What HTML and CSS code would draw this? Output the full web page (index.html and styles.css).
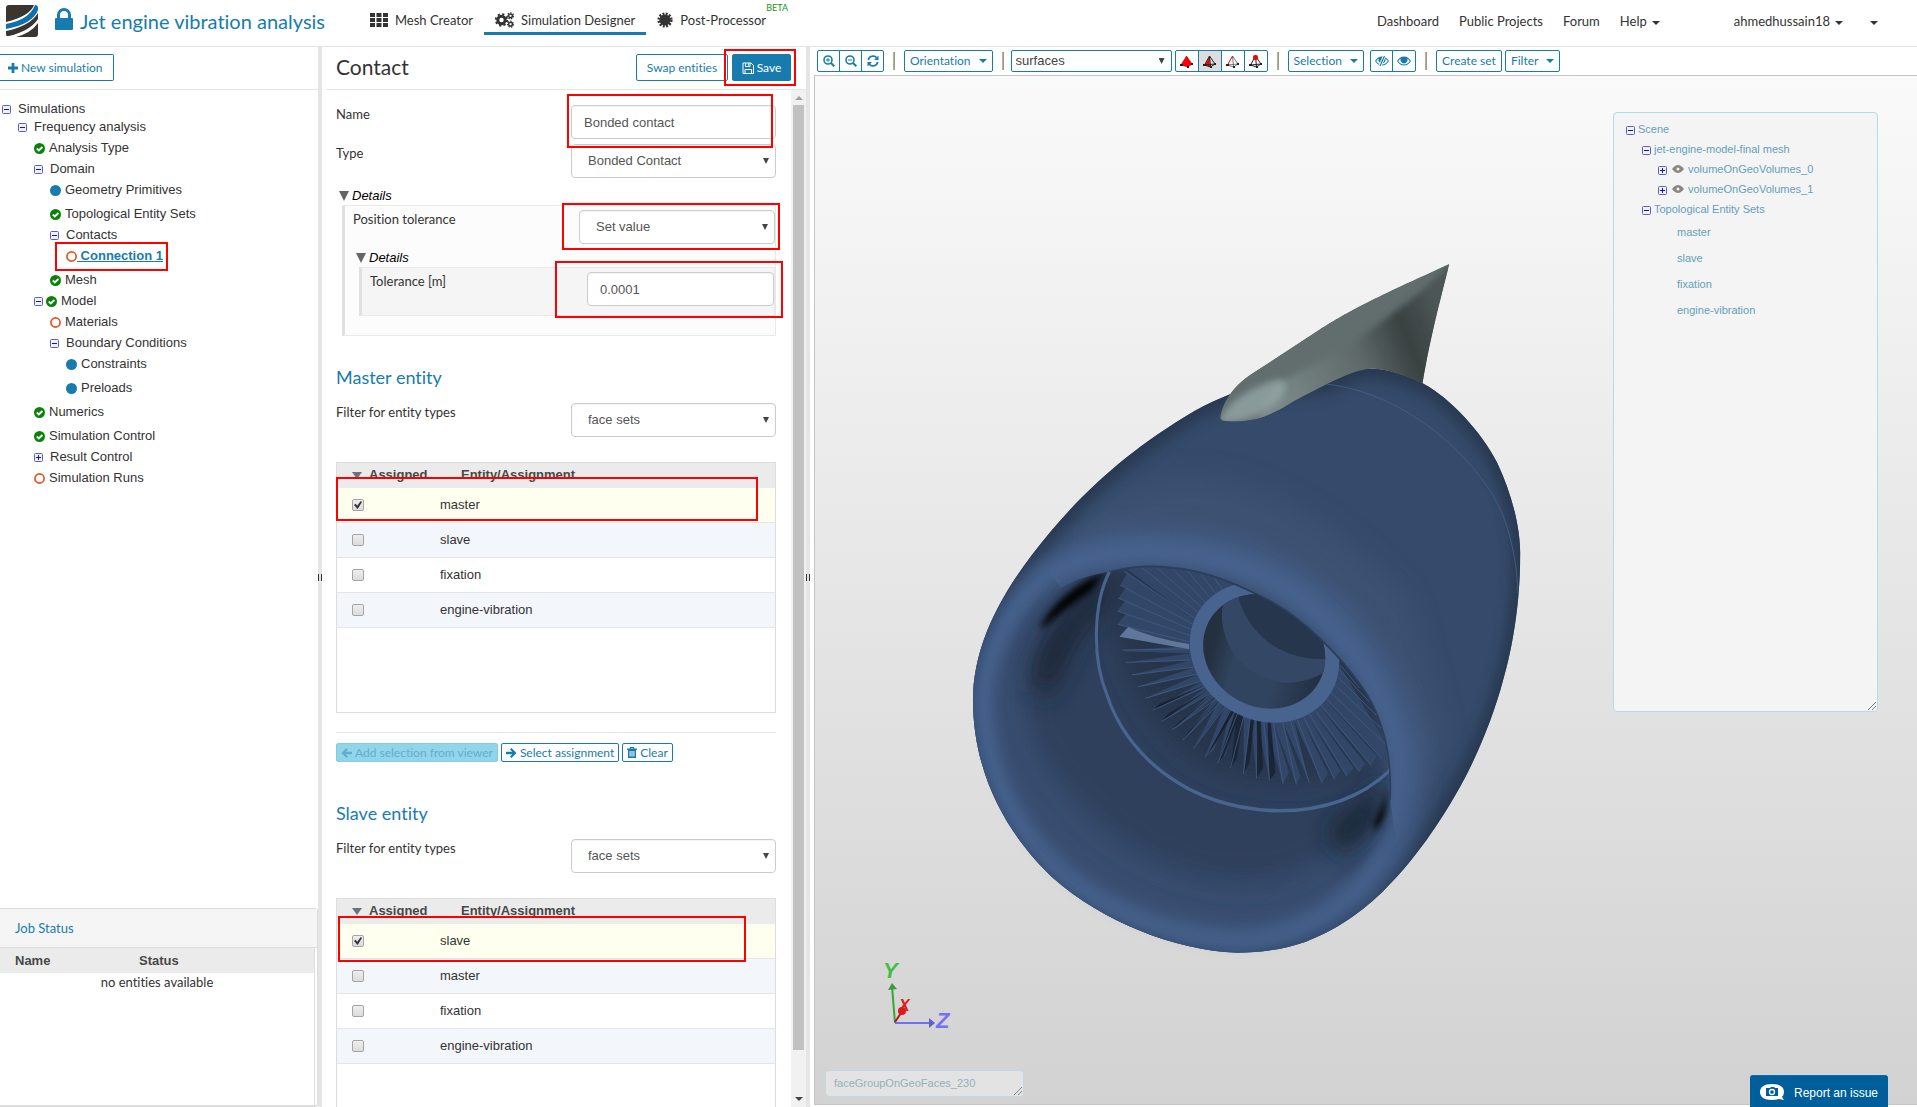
FILE: index.html
```html
<!DOCTYPE html>
<html lang="en">
<head>
<meta charset="utf-8">
<title>Jet engine vibration analysis</title>
<link rel="stylesheet" href="styles.css">
</head>
<body>
<svg class="defs" aria-hidden="true">
  <symbol id="i-lock" viewBox="0 0 18 22"><path d="M2 10V7a7 7 0 0 1 14 0v3h1q1 0 1 1v10q0 1-1 1H1q-1 0-1-1V11q0-1 1-1zM5 10h8V7a4 4 0 0 0-8 0z"/></symbol>
  <symbol id="i-grid" viewBox="0 0 18 14"><path d="M0 0h5v4H0zM6.500 0h5v4h-5zM13 0h5v4h-5zM0 5h5v4H0zM6.500 5h5v4h-5zM13 5h5v4h-5zM0 10h5v4H0zM6.500 10h5v4h-5zM13 10h5v4h-5z"/></symbol>
  <symbol id="i-gears" viewBox="0 0 19 16"><g fill="none" stroke="currentColor"><circle cx="6.500" cy="8" r="3.700" stroke-width="3"/><circle cx="6.500" cy="8" r="5.700" stroke-width="2" stroke-dasharray="2.200 2.270"/><circle cx="15.500" cy="3.800" r="1.900" stroke-width="1.500"/><circle cx="15.500" cy="3.800" r="3" stroke-width="1.200" stroke-dasharray="1.400 1.290"/><circle cx="15.500" cy="12.200" r="1.900" stroke-width="1.500"/><circle cx="15.500" cy="12.200" r="3" stroke-width="1.200" stroke-dasharray="1.400 1.290"/></g></symbol>
  <symbol id="i-burst" viewBox="0 0 16 16"><circle cx="8" cy="8" r="5.600"/><circle cx="8" cy="8" r="6.300" fill="none" stroke="currentColor" stroke-width="2.600" stroke-dasharray="1.900 1.400"/></symbol>
  <symbol id="i-plus" viewBox="0 0 10 10"><path d="M3.600 0h2.800v3.600H10v2.800H6.400V10H3.600V6.400H0V3.600h3.600z"/></symbol>
  <symbol id="i-save" viewBox="0 0 12 12"><path fill="none" stroke="currentColor" d="M1 1h8l2.500 2.500v8H1zM3.500 1v3.500h4.500V1M3 11V7.500h6.500V11M6.500 1.500v2"/></symbol>
  <symbol id="i-left" viewBox="0 0 11 10"><path d="M5.500 0 7 1.500 4.800 3.800H11v2.400H4.800L7 8.500 5.500 10 .5 5z"/></symbol>
  <symbol id="i-right" viewBox="0 0 11 10"><path d="M5.500 0 4 1.500l2.200 2.300H0v2.400h6.200L4 8.500 5.500 10l5-5z"/></symbol>
  <symbol id="i-trash" viewBox="0 0 10 11"><path fill-rule="evenodd" d="M3 1.500V0h4v1.500h3v1.300H9V11H1V2.800H0V1.500zM4 1v.5h2V1zM2.600 4v5.500h1V4zm1.900 0v5.500h1V4zm1.900 0v5.500h1V4z"/></symbol>
  <symbol id="i-zin" viewBox="0 0 12 12"><g fill="none" stroke="currentColor"><circle cx="5" cy="5" r="4" stroke-width="1.600"/><path stroke-width="2" d="m8 8 3.300 3.300"/><path d="M3 5h4M5 3v4"/></g></symbol>
  <symbol id="i-zout" viewBox="0 0 12 12"><g fill="none" stroke="currentColor"><circle cx="5" cy="5" r="4" stroke-width="1.600"/><path stroke-width="2" d="m8 8 3.300 3.300"/><path d="M3 5h4"/></g></symbol>
  <symbol id="i-refresh" viewBox="0 0 12 12"><path fill="none" stroke="currentColor" stroke-width="1.700" d="M1.300 5A4.800 4.800 0 0 1 9.700 2.800M10.700 7A4.800 4.800 0 0 1 2.300 9.200"/><path d="M11.500.500V5H7zM.500 11.500V7H5z"/></symbol>
  <symbol id="i-eye" viewBox="0 0 14 10"><path fill-rule="evenodd" d="M7 .5C10 .5 12.500 2.500 14 5c-1.500 2.500-4 4.500-7 4.500S1.500 7.500 0 5C1.500 2.500 4 .5 7 .5zM3.700 2.400C2.600 3.100 1.800 4 1.200 5 2.500 7 4.500 8.500 7 8.500S11.500 7 12.800 5c-.6-1-1.400-1.900-2.500-2.600a3.600 3.600 0 1 1-6.600 0z"/></symbol>
  <symbol id="i-eyeoff" viewBox="0 0 14 10"><path fill-rule="evenodd" d="M7 .5C10 .5 12.500 2.500 14 5c-1.500 2.500-4 4.500-7 4.500S1.500 7.500 0 5C1.500 2.500 4 .5 7 .5zM3.700 2.400C2.600 3.100 1.800 4 1.200 5 2.500 7 4.500 8.500 7 8.500S11.500 7 12.800 5c-.6-1-1.400-1.900-2.500-2.600a3.600 3.600 0 1 1-6.600 0z"/><path stroke="#fff" stroke-width="3" d="M9.500 0 5 10"/><path stroke="currentColor" stroke-width="1.200" d="M9.500 0 5 10"/></symbol>
  <symbol id="i-eyegray" viewBox="0 0 12 8"><path fill="#8a8880" fill-rule="evenodd" d="M0 4Q3 0 6 0t6 4Q9 8 6 8T0 4zm4.500 0a1.500 1.500 0 1 0 3 0 1.500 1.500 0 1 0-3 0z"/></symbol>
  <symbol id="i-ok" viewBox="0 0 11 11"><circle cx="5.500" cy="5.500" r="5.500" fill="#0a820a"/><path fill="none" stroke="#fff" stroke-width="1.800" d="m2.800 5.500 2 2L8.400 4"/></symbol>
  <symbol id="i-dot" viewBox="0 0 11 11"><circle cx="5.500" cy="5.500" r="5.500" fill="#177cad"/></symbol>
  <symbol id="i-ring" viewBox="0 0 11 11"><circle cx="5.500" cy="5.500" r="4.600" fill="none" stroke="#e0572a" stroke-width="1.700"/></symbol>
  <symbol id="i-minus" viewBox="0 0 9 9"><rect x=".5" y=".5" width="8" height="8" rx="1" fill="#f0f0fc" stroke="#5b63ad"/><path stroke="#1414b0" d="M2 4.500h5"/></symbol>
  <symbol id="i-expand" viewBox="0 0 9 9"><rect x=".5" y=".5" width="8" height="8" rx="1" fill="#f0f0fc" stroke="#5b63ad"/><path stroke="#1414b0" d="M2 4.500h5M4.500 2v5"/></symbol>
  <symbol id="i-tet1" viewBox="0 0 13 13"><path fill="#f00" stroke="#900" stroke-width=".6" d="M6.500 1 1 10l7 2 4-3z"/><path fill="#222" d="M0 9h3v2H0zM7 11h2v2H7zM11 8h2v2h-2z"/></symbol>
  <symbol id="i-tet2" viewBox="0 0 13 13"><path fill="#f00" d="M6.500 1 2 10l5 2z"/><path fill="none" stroke="#222" d="M6.500 1 1.500 10l6 2zm0 0L12 9l-4.500 3M1.500 10 12 9"/><path fill="#222" d="M0 9h3v2H0zM7 11h2v2H7zM11 8h2v2h-2z"/></symbol>
  <symbol id="i-tet3" viewBox="0 0 13 13"><path fill="none" stroke="#555" stroke-width=".8" d="M6.500 1 12 9l-4.500 3zM7.500 12 1.500 10 12 9"/><path stroke="#e00" d="m6.500 1-5 9"/><path fill="#222" d="M0 9h3v2H0zM7 11h2v2H7zM11 8h2v2h-2z"/></symbol>
  <symbol id="i-tet4" viewBox="0 0 13 13"><path fill="none" stroke="#222" d="M6.500 1 1.500 10l6 2zm0 0L12 9l-4.500 3M1.500 10 12 9"/><path fill="#222" d="M0 9h3v2H0zM7 11h2v2H7zM11 8h2v2h-2z"/><rect x="4" width="5" height="5" rx="2" fill="#f00"/></symbol>
</svg>

<header class="top">
  <a class="logo" href="#" aria-label="Home">
    <svg width="32" height="32" viewBox="0 0 32 32"><defs><clipPath id="lc"><rect width="32" height="32" rx="3"/></clipPath></defs><g clip-path="url(#lc)"><path fill="#fff" d="M0 0h32v32H0z"/><path fill="#3a3531" d="M0 0h28Q24 11 0 17z"/><path fill="#0f70ae" d="M0 19Q23 15 29 0h3v5Q27 19 0 24z"/><path fill="#3a3531" d="M0 26Q24 21 32 8v6Q24 26 3 31L0 31zM10 32q15-4 22-14v14z"/></g></svg>
  </a>
  <svg class="lock" width="18" height="22"><use href="#i-lock"/></svg>
  <h1 class="title">Jet engine vibration analysis</h1>
  <nav class="modes">
    <a href="#"><svg width="18" height="14"><use href="#i-grid"/></svg>Mesh Creator</a>
    <a href="#" class="on"><svg width="19" height="16"><use href="#i-gears"/></svg>Simulation Designer</a>
    <a href="#"><svg width="16" height="16"><use href="#i-burst"/></svg>Post-Processor<sup class="beta">BETA</sup></a>
  </nav>
  <nav class="links">
    <a href="#">Dashboard</a><a href="#">Public Projects</a><a href="#">Forum</a><a href="#">Help<i class="caret"></i></a>
    <a href="#" class="user">ahmedhussain18<i class="caret"></i></a><a href="#" class="more" aria-label="More"><i class="caret"></i></a>
  </nav>
</header>

<main class="work">
  <section class="side">
    <div class="side-bar"><button class="btn new"><svg width="10" height="10"><use href="#i-plus"/></svg>New simulation</button></div>
    <ul class="tree">
      <li class="folder"><svg class="tg"><use href="#i-minus"/></svg>Simulations</li>
      <li class="folder l1"><svg class="tg"><use href="#i-minus"/></svg>Frequency analysis</li>
      <li class="l2"><svg class="st"><use href="#i-ok"/></svg>Analysis Type</li>
      <li class="folder l2"><svg class="tg"><use href="#i-minus"/></svg>Domain</li>
      <li class="l3"><svg class="st"><use href="#i-dot"/></svg>Geometry Primitives</li>
      <li class="l3"><svg class="st"><use href="#i-ok"/></svg>Topological Entity Sets</li>
      <li class="folder l3"><svg class="tg"><use href="#i-minus"/></svg>Contacts</li>
      <li class="l4"><svg class="st flush"><use href="#i-ring"/></svg><a href="#" class="current">&nbsp;Connection 1</a><span class="mark m-conn"></span></li>
      <li class="l3"><svg class="st"><use href="#i-ok"/></svg>Mesh</li>
      <li class="folder l2"><svg class="tg near"><use href="#i-minus"/></svg><svg class="st"><use href="#i-ok"/></svg>Model</li>
      <li class="l3"><svg class="st"><use href="#i-ring"/></svg>Materials</li>
      <li class="folder l3"><svg class="tg"><use href="#i-minus"/></svg>Boundary Conditions</li>
      <li class="l4"><svg class="st"><use href="#i-dot"/></svg>Constraints</li>
      <li class="l4"><svg class="st"><use href="#i-dot"/></svg>Preloads</li>
      <li class="l2"><svg class="st"><use href="#i-ok"/></svg>Numerics</li>
      <li class="l2"><svg class="st"><use href="#i-ok"/></svg>Simulation Control</li>
      <li class="folder l2"><svg class="tg"><use href="#i-expand"/></svg>Result Control</li>
      <li class="l2"><svg class="st"><use href="#i-ring"/></svg>Simulation Runs</li>
    </ul>
    <section class="jobs">
      <h2>Job Status</h2>
      <div class="jobs-body">
        <table><thead><tr><th>Name</th><th>Status</th></tr></thead><tbody><tr><td colspan="2">no entities available</td></tr></tbody></table>
      </div>
    </section>
  </section>
  <div class="split"><i></i></div>

  <section class="panel">
    <div class="panel-head">
      <h2>Contact</h2>
      <button class="btn swap">Swap entities</button>
      <span class="wrap"><button class="btn save"><svg width="12" height="12"><use href="#i-save"/></svg>Save</button><span class="mark m-save"></span></span>
    </div>
    <div class="panel-body">
      <form class="form">
        <div class="row"><label for="nm">Name</label><span class="wrap"><input class="ctl" id="nm" value="Bonded contact"><span class="mark m-name"></span></span></div>
        <div class="row"><label for="tp">Type</label><span class="wrap sel"><select class="ctl" id="tp"><option>Bonded Contact</option></select></span></div>
        <div class="details">Details</div>
        <div class="box">
          <div class="row"><label for="pt">Position tolerance</label><span class="wrap sel"><select class="ctl" id="pt"><option>Set value</option></select><span class="mark m-pos"></span></span></div>
          <div class="details inner">Details</div>
          <div class="box deep">
            <div class="row"><label for="tl">Tolerance [m]</label><span class="wrap"><input class="ctl" id="tl" value="0.0001"><span class="mark m-tol"></span></span></div>
          </div>
        </div>

        <h3>Master entity</h3>
        <div class="row"><label for="f1">Filter for entity types</label><span class="wrap sel"><select class="ctl" id="f1"><option>face sets</option></select></span></div>
        <div class="grid">
          <table>
            <thead><tr><th class="c1">Assigned</th><th>Entity/Assignment</th></tr></thead>
            <tbody>
              <tr class="picked"><td><input type="checkbox" id="a1" checked></td><td><label for="a1">master</label></td></tr>
              <tr><td><input type="checkbox" id="a2"></td><td><label for="a2">slave</label></td></tr>
              <tr><td><input type="checkbox" id="a3"></td><td><label for="a3">fixation</label></td></tr>
              <tr><td><input type="checkbox" id="a4"></td><td><label for="a4">engine-vibration</label></td></tr>
            </tbody>
          </table>
          <span class="mark m-master"></span>
        </div>
        <div class="acts">
          <button type="button" class="btn sm" disabled><svg width="11" height="10"><use href="#i-left"/></svg>Add selection from viewer</button>
          <button type="button" class="btn sm"><svg width="11" height="10"><use href="#i-right"/></svg>Select assignment</button>
          <button type="button" class="btn sm"><svg width="10" height="11"><use href="#i-trash"/></svg>Clear</button>
        </div>

        <h3 class="next">Slave entity</h3>
        <div class="row"><label for="f2">Filter for entity types</label><span class="wrap sel"><select class="ctl" id="f2"><option>face sets</option></select></span></div>
        <div class="grid">
          <table>
            <thead><tr><th class="c1">Assigned</th><th>Entity/Assignment</th></tr></thead>
            <tbody>
              <tr class="picked"><td><input type="checkbox" id="b1" checked></td><td><label for="b1">slave</label></td></tr>
              <tr><td><input type="checkbox" id="b2"></td><td><label for="b2">master</label></td></tr>
              <tr><td><input type="checkbox" id="b3"></td><td><label for="b3">fixation</label></td></tr>
              <tr><td><input type="checkbox" id="b4"></td><td><label for="b4">engine-vibration</label></td></tr>
            </tbody>
          </table>
          <span class="mark m-slave"></span>
        </div>
      </form>
      <div class="scroll"><i class="up"></i><i class="thumb"></i><i class="down"></i></div>
    </div>
  </section>
  <div class="split"><i></i></div>

  <section class="viewer">
    <div class="tools">
      <div class="group zoomers">
        <button aria-label="Zoom in"><svg width="12" height="12"><use href="#i-zin"/></svg></button><button aria-label="Zoom out"><svg width="12" height="12"><use href="#i-zout"/></svg></button><button aria-label="Reset view"><svg width="12" height="12"><use href="#i-refresh"/></svg></button>
      </div>
      <i class="bar"></i>
      <button class="btn tool">Orientation<i class="caret"></i></button>
      <i class="bar"></i>
      <span class="sel surf"><select aria-label="Render mode"><option>surfaces</option></select></span>
      <div class="group tets">
        <button aria-label="Volumes"><svg width="13" height="13"><use href="#i-tet1"/></svg></button><button class="down" aria-label="Faces"><svg width="13" height="13"><use href="#i-tet2"/></svg></button><button aria-label="Edges"><svg width="13" height="13"><use href="#i-tet3"/></svg></button><button aria-label="Nodes"><svg width="13" height="13"><use href="#i-tet4"/></svg></button>
      </div>
      <i class="bar"></i>
      <button class="btn tool">Selection<i class="caret"></i></button>
      <div class="group eyes"><button aria-label="Hide"><svg width="14" height="10"><use href="#i-eyeoff"/></svg></button><button aria-label="Show"><svg width="14" height="10"><use href="#i-eye"/></svg></button></div>
      <i class="bar"></i>
      <button class="btn tool set">Create set</button>
      <button class="btn tool filter">Filter<i class="caret"></i></button>
    </div>

    <div class="canvas">
      <svg class="model" viewBox="0 0 1102 1028" aria-label="Jet engine model">
        <defs>
          <filter id="b8" x="-50%" y="-50%" width="200%" height="200%"><feGaussianBlur stdDeviation="8"/></filter>
          <filter id="b16" x="-50%" y="-50%" width="200%" height="200%"><feGaussianBlur stdDeviation="16"/></filter>
          <filter id="b30" x="-50%" y="-50%" width="200%" height="200%"><feGaussianBlur stdDeviation="30"/></filter>
          <linearGradient id="side" gradientUnits="userSpaceOnUse" x1="880" y1="380" x2="1290" y2="180"><stop offset="0" stop-color="#7a8888"/><stop offset=".5" stop-color="#5e6968"/><stop offset=".78" stop-color="#384140"/><stop offset="1" stop-color="#4c5655"/></linearGradient>
          <linearGradient id="bore" gradientUnits="userSpaceOnUse" x1="680" y1="900" x2="980" y2="1000"><stop offset="0" stop-color="#22303f"/><stop offset=".2" stop-color="#31445f"/><stop offset=".55" stop-color="#31445f"/><stop offset="1" stop-color="#1e2b3e"/></linearGradient>
          <path id="hull" d="M60 1000C62 900 110 800 215 685C320 570 450 465 640 372C670 358 705 345 735 335L985 312C1030 295 1060 280 1100 280C1150 282 1195 295 1235 312C1310 345 1390 420 1430 485C1475 565 1492 640 1490 690C1490 790 1470 890 1445 960C1420 1040 1370 1140 1320 1210C1250 1310 1190 1370 1130 1420C1060 1475 1000 1505 930 1528C870 1545 810 1552 750 1552C590 1548 400 1485 270 1390C180 1320 60 1190 60 1000Z"/>
          <path id="pylon" d="M706 388C712 350 745 312 800 285L965 195C1040 155 1110 125 1305 52C1285 120 1258 200 1235 312Q1150 280 1100 280C1050 282 960 325 900 350Q860 372 820 385C785 396 740 397 712 393Z"/>
          <clipPath id="inPylon"><use href="#pylon"/></clipPath>
          <clipPath id="inHull"><use href="#hull"/></clipPath>
          <clipPath id="mouth"><path d="M0 1568V600H150L290 758C330 738 370 729 420 722C500 705 560 710 620 718C700 730 800 765 880 808C960 855 1040 925 1090 990C1140 1060 1155 1140 1150 1220L1185 1400L1000 1568Z"/></clipPath>
          <clipPath id="hole"><ellipse cx="821" cy="896" rx="161" ry="123" transform="rotate(12 821 896)"/></clipPath>
        </defs>
        <g transform="translate(135 164) scale(.38265 .45918)">
          <use href="#hull" fill="#364b6b"/>
          <g clip-path="url(#inHull)">
            <path fill="#3c5273" filter="url(#b30)" d="M300 620C600 430 900 520 1200 780L1300 1100L1180 1250C1100 900 800 640 300 700Z" opacity=".9"/>
            <use href="#hull" fill="none" stroke="#283850" stroke-width="44" filter="url(#b16)"/>
            <path fill="none" stroke="#45618d" stroke-width="56" filter="url(#b30)" d="M85 1000C90 880 180 745 330 700C520 640 740 670 900 750C1040 820 1150 960 1190 1100C1215 1220 1180 1330 1080 1420C960 1510 850 1530 750 1530C560 1520 400 1465 290 1385C160 1280 85 1160 85 1000Z"/>
            <path fill="none" stroke="#47638f" stroke-width="38" filter="url(#b16)" d="M88 1000C96 880 200 730 350 695C520 660 740 685 890 770C1030 850 1120 960 1165 1100C1180 1220 1150 1320 1060 1410C950 1490 850 1515 750 1520C560 1510 400 1450 290 1370C160 1270 88 1140 88 1000Z"/>
            <path fill="none" stroke="#435f8b" stroke-width="2" d="M985 314C1200 335 1380 480 1440 590C1470 650 1482 710 1484 770"/>
          </g>
          <g clip-path="url(#inPylon)">
            <use href="#pylon" fill="#626e6e"/>
            <path fill="url(#side)" filter="url(#b8)" d="M1305 52C1240 110 1140 175 1000 250C930 285 860 300 830 340L790 420H1300L1330 52Z"/>
            <path fill="#94a5a6" filter="url(#b8)" d="M700 400C725 350 780 325 850 305Q900 300 860 350Q790 400 700 400Z" opacity=".8"/>
          </g>
          <g clip-path="url(#mouth)">
            <path fill="#374d70" filter="url(#b30)" d="M130 1000C130 900 200 810 300 755L420 700L640 680L900 780L1150 1000L1135 1240C1110 1350 980 1470 780 1495C600 1490 410 1430 290 1330C190 1240 130 1120 130 1000Z"/>
            <path fill="#2f415c" filter="url(#b30)" d="M200 1000C200 910 250 820 330 770L420 700L640 680L900 780L1130 1000L1110 1200C1060 1310 950 1390 780 1400C620 1400 470 1340 350 1240C260 1160 200 1090 200 1000Z"/>
            <path fill="#1d2838" filter="url(#b30)" d="M210 980C215 890 270 800 430 715L450 770L350 850L265 990Z"/>
            <path fill="#000" filter="url(#b8)" d="M235 845C260 800 320 750 410 722L372 762L300 805L245 843Z"/>
            <path fill="#26354c" filter="url(#b30)" d="M420 700L1080 800L1130 1120Q900 1230 640 1130Q400 980 420 700Z"/>
            <path fill="#18222f" filter="url(#b30)" d="M1130 1160Q1080 1230 980 1290L1030 1340L1120 1260Z"/>
            <path fill="#000" filter="url(#b8)" d="M1148 1170Q1136 1230 1108 1270L1110 1288L1135 1255Z"/>
            <path fill="#33486a" opacity=".92" d="M660 840L455 718L462 727L445 752L460 757L440 780L458 786L437 808L460 814L438 837L463 843L443 862L625 885L450 893L464 896L630 900L460 920L632 915L475 947L484 948L640 930L490 973L503 973L650 945L510 998L526 996L662 960L530 1024L545 1018L675 970L553 1048L570 1040L690 980L580 1067L600 1058L700 990L608 1089L628 1075L705 1000L636 1108L720 1010L667 1126L690 1110L735 1015L700 1140L720 1122L752 1020L733 1150L750 1130L768 1030L767 1163L782 1140L785 1035L801 1173L818 1150L800 1040L835 1177L850 1155L820 1045L870 1184L886 1160L845 1050L905 1186L916 1168L870 1050L939 1183L900 1048L972 1182L988 1162L920 1044L1005 1175L1020 1155L935 1038L1037 1167L1055 1150L950 1028L1070 1158L1085 1140L965 1015L1100 1144L1115 1124L980 1000L1130 1131L1141 1100L1000 900L740 745L660 710L455 712Z"/>
            <path fill="#141d2b" opacity=".8" d="M752 1020L733 1150L750 1130L768 1030ZM735 1020L667 1126L695 1095L742 1028ZM785 1040L767 1163L782 1140L795 1042ZM800 1042L801 1173L818 1150L812 1044ZM745 1028L700 1140L715 1125L756 1034ZM830 1045L835 1177L850 1160L838 1046ZM700 1000L608 1089L622 1072ZM685 990L580 1067L596 1052ZM664 970L530 1024L548 1010ZM675 980L553 1048L570 1032Z"/>
            <path fill="none" stroke="#425a82" stroke-width="2" d="M455 722L650 830M445 752L642 840M440 780L635 850M437 808L630 862M438 837L625 875M500 712L655 815M540 713L665 805M580 715L675 795M620 720L685 785M655 727L700 775M690 735L715 765M450 893L625 890M460 920L628 915M475 947L640 930M490 973L650 945M510 998L660 960M530 1024L670 972M553 1048L685 985M580 1067L695 1000M608 1089L705 1008M636 1108L720 1015M667 1126L735 1022M700 1140L752 1030M733 1150L768 1036M767 1163L785 1040M801 1173L800 1044M835 1177L820 1048M870 1184L845 1050M905 1186L870 1050M939 1183L890 1048M972 1182L908 1045M1005 1175L925 1040M1037 1167L940 1033M1070 1158L955 1025M1100 1144L970 1013M1130 1131L985 1000M1140 1100L995 985M1135 1070L1005 968M1120 1040L1012 950M1095 1005L1018 937M1070 975L1020 925"/>
            <path fill="#60769a" d="M466 843L443 864L625 891V880Q530 868 466 843Z"/>
            <path fill="none" stroke="#48648f" stroke-width="8" d="M417 722C375 790 370 910 410 990C460 1120 620 1240 860 1243C990 1243 1080 1210 1150 1155"/>
            <ellipse cx="822" cy="898" rx="198" ry="150" transform="rotate(14 822 898)" fill="#48638d"/>
            <g clip-path="url(#hole)"><path fill="url(#bore)" d="M640 740h360v300H640z"/><path fill="#344866" d="M735 765Q700 790 715 850Q745 950 880 965Q950 962 1000 930V740Z"/><path fill="#26364d" d="M750 765Q765 830 830 875Q900 918 1000 912V740Z"/></g>
          </g>
          <path fill="none" stroke="#2b3e5b" stroke-width="4" d="M420 722C500 705 560 710 620 718C700 730 800 765 880 808C960 855 1040 925 1090 990C1140 1060 1155 1140 1150 1220"/>
        </g>
      </svg>

      <svg class="axes" width="80" height="80" viewBox="0 0 80 80" aria-label="Axes">
        <path stroke="#36a83b" stroke-width="2" d="M15 65 12 28"/><path fill="#3a9c3f" d="m8 32 4-7 5 6z"/>
        <path stroke="#6f70f5" stroke-width="2" d="M15 65h36"/><path fill="#6062c8" d="m49 60 6 5-6 5z"/>
        <path stroke="#b41818" stroke-width="2" d="m15 64 8-12"/><circle cx="22" cy="53" r="4" fill="#d81c1c"/>
        <text x="3" y="20" class="ay">Y</text><text x="19" y="53" class="ax">X</text><text x="56" y="70" class="az">Z</text>
      </svg>

      <ul class="scene">
        <li><svg class="tg"><use href="#i-minus"/></svg>Scene</li>
        <li class="l1"><svg class="tg"><use href="#i-minus"/></svg>jet-engine-model-final mesh</li>
        <li class="l2"><svg class="tg"><use href="#i-expand"/></svg><svg class="eye" width="12" height="8"><use href="#i-eyegray"/></svg>volumeOnGeoVolumes_0</li>
        <li class="l2"><svg class="tg"><use href="#i-expand"/></svg><svg class="eye" width="12" height="8"><use href="#i-eyegray"/></svg>volumeOnGeoVolumes_1</li>
        <li class="l1"><svg class="tg"><use href="#i-minus"/></svg>Topological Entity Sets</li>
        <li class="leaf">master</li><li class="leaf">slave</li><li class="leaf">fixation</li><li class="leaf">engine-vibration</li>
        <li class="grip"><svg width="8" height="8" viewBox="0 0 8 8"><path stroke="#777" d="m0 8 8-8M4 8l4-4"/></svg></li>
      </ul>

      <div class="picked-name">faceGroupOnGeoFaces_230<svg width="8" height="8" viewBox="0 0 8 8"><path stroke="#888" d="m0 8 8-8M4 8l4-4"/></svg></div>
    </div>
  </section>
</main>
<button class="report"><svg width="25" height="17" viewBox="0 0 25 17"><path fill="#fff" d="M12 0C20 0 24 3 24 8q0 3-2 5l2 3-5-1q-3 1-7 1C4 16 0 13 0 8S4 0 12 0z"/><path fill="#005f9b" d="M6 4h4l1-1h3l1 1h3v8H6z"/><circle cx="12" cy="8" r="2.500" fill="none" stroke="#fff" stroke-width="1.300"/></svg>Report an issue</button>
</body>
</html>
```
FILE: styles.css
```css
* { box-sizing: border-box; }
html, body { height: 100%; margin: 0; }
body {
  display: flex;
  flex-direction: column;
  overflow: hidden;
  background: #fff;
  color: #333;
  font: 13px/18px Lato, sans-serif;
  font-variant-ligatures: none;
}
h1, h2, h3, ul { margin: 0; padding: 0; font-weight: 400; }
ul { list-style: none; }
a { color: inherit; text-decoration: none; }
button, input, select { font: inherit; margin: 0; }
button { font-variant-ligatures: none; }
svg { fill: currentColor; flex: none; }
.defs { position: absolute; width: 0; height: 0; }
.mark { position: absolute; border: 2px solid #f00; z-index: 2; pointer-events: none; }
.caret {
  display: inline-block;
  border: 4px solid transparent;
  border-top-color: currentColor;
  border-bottom: 0;
  margin-left: 5px;
  vertical-align: 1px;
}

/* top bar */
.top { display: flex; align-items: center; flex: none; height: 47px; padding: 0 39px 5px 6px; border-bottom: 1px solid #e5e5e5; }
.logo { display: flex; }
.lock { margin: 0 7px 4px 17px; color: #177cad; }
.title { font-size: 20px; line-height: 26px; color: #177cad; white-space: nowrap; }
.modes { display: flex; margin-left: 34px; align-self: stretch; }
.modes a { display: flex; align-items: center; gap: 7px; height: 35px; padding: 8px 11px 0; border-bottom: 3px solid transparent; position: relative; white-space: nowrap; }
.modes .on { border-color: #177cad; }
.beta { position: absolute; right: -11px; top: 2px; font-size: 9px; line-height: 11px; color: #149414; }
.links { display: flex; gap: 20px; margin-left: auto; white-space: nowrap; }
.user { margin-left: 54px; }
.more { margin-left: 2px; }

/* columns */
.work { flex: 1; min-height: 0; display: grid; grid-template-columns: 318px 4px 484px 4px minmax(0, 1fr); }
.split { background: #e5e5e5; display: flex; align-items: center; justify-content: center; }
.split i { width: 4px; height: 7px; border: solid #333; border-width: 0 1px; }

.btn {
  display: inline-flex; align-items: center; justify-content: center; gap: 3px;
  padding: 0 10px; height: 27px;
  border: 1px solid #177cad; border-radius: 2px;
  background: #fff; color: #177cad; font-size: 12px; white-space: nowrap;
}
.btn.tool { height: 22px; padding: 0 5px; }

/* left column */
.side { display: flex; flex-direction: column; min-height: 0; }
.side-bar { flex: none; height: 43px; padding-top: 7px; border-bottom: 1px solid #e5e5e5; }
.new { border-left: 0; padding: 0 10px 0 8px; border-radius: 0 2px 2px 0; }
.tree { flex: 1; padding: 10px 0 0 2px; font: 13px/18px "Liberation Sans", sans-serif; }
.tree li { position: relative; display: flex; align-items: center; height: 24px; white-space: nowrap; }
.tree .folder { height: 18px; }
.tree .l1 { padding-left: 16px; }
.tree .l2 { padding-left: 32px; }
.tree .l3 { padding-left: 48px; }
.tree .l4 { padding-left: 64px; }
.tg { width: 9px; height: 9px; margin-right: 7px; }
.tg.near { margin-right: 3px; }
.st { width: 11px; height: 11px; margin-right: 4px; }
.st.flush { margin-right: 0; }
.current { color: #177cad; font-weight: 700; text-decoration: underline; }
.m-conn { left: 53px; top: -2px; width: 113px; height: 29px; }
.jobs { flex: none; height: 199px; border: 1px solid #ddd; border-width: 1px 1px 2px 0; border-radius: 0 3px 3px 0; display: flex; flex-direction: column; }
.jobs h2 { font-size: 13px; line-height: 38px; padding-left: 15px; color: #177cad; background: #f5f5f5; border-bottom: 1px solid #ddd; }
.jobs-body { flex: 1; margin-right: 2px; border-right: 1px solid #ddd; }
.jobs table { width: 100%; border-collapse: collapse; }
.jobs th { width: 124px; height: 25px; padding: 0 0 0 15px; text-align: left; font: 700 13px/18px "Liberation Sans", sans-serif; color: #484848; background: #ebebeb; }
.jobs th + th { width: auto; }
.jobs td { padding: 0; text-align: center; }

/* contact panel */
.panel { display: flex; flex-direction: column; min-height: 0; }
.panel-head { flex: none; display: flex; align-items: flex-start; gap: 4px; height: 43px; margin-left: 4px; padding: 7px 15px 0 10px; border-bottom: 1px solid #e5e5e5; }
.panel-head h2 { flex: 1; font-size: 21px; line-height: 26px; }
.wrap { position: relative; display: block; }
.swap { width: 92px; }
.save { width: 59px; padding: 0; background: #177cad; color: #fff; }
.m-save { inset: -5px -5px -5px -8px; }
.panel-body { flex: 1; min-height: 0; display: flex; }
.form { flex: 1; min-width: 0; overflow: hidden; padding: 15px 15px 0 14px; }
.row { display: grid; grid-template-columns: 1fr 205px; height: 34px; }
.row + .row { margin-top: 5px; }
.ctl {
  display: block; width: 100%; height: 34px; padding: 0 12px;
  border: 1px solid #ccc; border-radius: 4px; background: #fff; color: #555;
  font: 13px/18px "Liberation Sans", sans-serif;
  box-shadow: inset 0 1px 1px #0000000d;
}
select { appearance: none; }
select.ctl { padding: 0 16px; }
.sel { position: relative; }
.sel::after { content: ""; position: absolute; right: 7px; top: 14px; width: 6px; height: 6px; background: #444; clip-path: polygon(0 0, 100% 0, 50% 100%); }
.m-name { inset: -11px 3px -9px -4px; }
.m-pos { inset: -7px -5px -6px -17px; }
.m-tol { inset: -11px -9px -12px -32px; }
.details { display: flex; align-items: center; gap: 3px; padding: 9px 0 0 3px; color: #000; font: italic 13px/18px "Liberation Sans", sans-serif; }
.details::before { content: ""; border: 5px solid transparent; border-top: 10px solid #666; border-bottom: 0; }
.details.inner { padding: 5px 0 0 11px; }
.box { margin-left: 6px; padding: 4px 0 19px; background: #fcfcfc; border: 1px solid #e9e9e9; border-left: 3px solid #e0e0e0; }
.box .row { grid-template-columns: 1fr 196px; padding-left: 8px; }
.box.deep { margin-left: 14px; padding-bottom: 9px; background: #f5f5f5; }
.box.deep .row { grid-template-columns: 1fr 187px; }
h3 { margin: 29px 0 14px; font-size: 18px; line-height: 24px; color: #177cad; }
h3.next { margin-top: 39px; }
.grid { position: relative; height: 251px; margin-top: 25px; border: 1px solid #ddd; font: 13px/18px "Liberation Sans", sans-serif; }
.grid table { width: 100%; border-collapse: separate; border-spacing: 0; table-layout: fixed; }
.grid th { height: 25px; padding: 0 0 2px 21px; text-align: left; background: #ebebeb; color: #484848; }
.grid .c1 { width: 103px; padding-left: 15px; white-space: nowrap; }
.c1::before { content: ""; display: inline-block; margin-right: 7px; border: 5px solid transparent; border-top: 7px solid #687281; border-bottom: 0; }
.grid td { height: 35px; padding: 0; border-bottom: 1px solid #e5e5e5; }
.grid td:first-child { padding-left: 15px; }
.grid tr:nth-child(even) td { background: #f3f6fb; }
.grid .picked td { background: #ffffef; }
.grid input { display: block; appearance: none; width: 12px; height: 12px; border: 1px solid #a5a5a5; border-radius: 2px; background: linear-gradient(#eee, #dcdcdc); position: relative; }
.grid input:checked::after { content: ""; position: absolute; inset: 1px; background: #333; clip-path: polygon(0 50%, 20% 35%, 40% 60%, 85% 0, 100% 12%, 45% 100%); }
.m-master { left: -1px; top: 14px; width: 422px; height: 44px; }
.m-slave { left: 1px; top: 17px; width: 408px; height: 46px; }
.acts { display: flex; gap: 3px; margin-top: 19px; padding-top: 10px; border-top: 1px solid #e5e5e5; }
.btn.sm { height: 19px; padding: 0 4px; }
.btn:disabled { background: #92d5e8; border-color: #84cce2; color: #5eafcf; }
.scroll { flex: none; width: 15px; padding: 6px 2px; background: #f1f1f1; display: flex; flex-direction: column; align-items: center; }
.scroll .up { border: 4px solid transparent; border-bottom-color: #a0a0a0; border-top: 0; }
.scroll .thumb { width: 11px; height: 94%; margin: 5px 0 auto; background: #c1c1c1; }
.scroll .down { border: 4px solid transparent; border-top-color: #444; border-bottom: 0; }

/* viewer */
.viewer { display: flex; flex-direction: column; min-width: 0; padding: 0 0 2px 4px; }
.tools { flex: none; display: flex; align-items: center; height: 28px; padding-left: 3px; }
.group { display: flex; height: 22px; border: 1px solid #177cad; border-radius: 2px; }
.group button { flex: 1; display: flex; align-items: center; justify-content: center; padding: 0; border: 0; background: none; color: #177cad; }
.group button + button { border-left: 1px solid #177cad; }
.group .down { background: #ddd; }
.zoomers { width: 67px; }
.tets { width: 93px; margin-left: 3px; }
.eyes { width: 46px; margin-left: 6px; }
.bar { width: 2px; height: 18px; margin: 0 9px; border-left: 1px solid #cfa877; border-right: 1px solid #8b9cab; }
.surf { width: 161px; margin-left: -2px; }
.surf select { display: block; width: 100%; height: 22px; padding: 0 4px; border: 1px solid #177cad; border-radius: 2px; background: #fff; color: #444; font: 13px/18px "Liberation Sans", sans-serif; }
.surf::after { top: 8px; }
.set { width: 66px; }
.filter { margin-left: 3px; }
.canvas { flex: 1; min-height: 0; position: relative; border: 1px solid #c4c4c4; border-right: 0; background: linear-gradient(#fafafa, #d2d2d2); }
.model { display: block; width: 100%; height: 100%; }
.axes { position: absolute; left: 65px; bottom: 66px; font: italic 700 22px/22px "Liberation Sans", sans-serif; overflow: visible; }
.ay { fill: #3fbf45; }
.ax { fill: #e01b1b; font-size: 16px; }
.az { fill: #7172f7; }
.scene {
  position: absolute; right: 39px; top: 36px; width: 265px; height: 600px;
  padding: 6px 0 0 12px; border: 1px solid #b5dbe8; border-radius: 4px;
  background: #f4f4f4; color: #649fba; font: 11px/18px "Liberation Sans", sans-serif;
}
.scene li { display: flex; align-items: center; height: 20px; }
.scene .tg { margin: 2px 3px 0 0; }
.scene .l1 { padding-left: 16px; }
.scene .l2 { padding-left: 32px; }
.scene .eye { margin: 0 4px 0 2px; }
.scene .leaf { height: 26px; padding-left: 51px; }
.scene .grip { position: absolute; right: 1px; bottom: 1px; height: 8px; }
.picked-name { position: absolute; left: 10px; bottom: 7px; width: 199px; height: 27px; padding-left: 8px; border: 1px solid #c4d9df; border-radius: 4px; background: #e3e3e3; color: #92b2bf; font: 11px/25px "Liberation Sans", sans-serif; }
.picked-name svg { position: absolute; right: 1px; bottom: 1px; }
.report { position: fixed; right: 29px; bottom: 0; width: 138px; height: 32px; display: flex; align-items: center; gap: 9px; padding: 2px 10px 0; border: 0; border-top: 1px solid #0070b8; border-radius: 3px 3px 0 0; background: #005f9b; color: #fff; font: 12px/18px "Liberation Sans", sans-serif; white-space: nowrap; }
```
